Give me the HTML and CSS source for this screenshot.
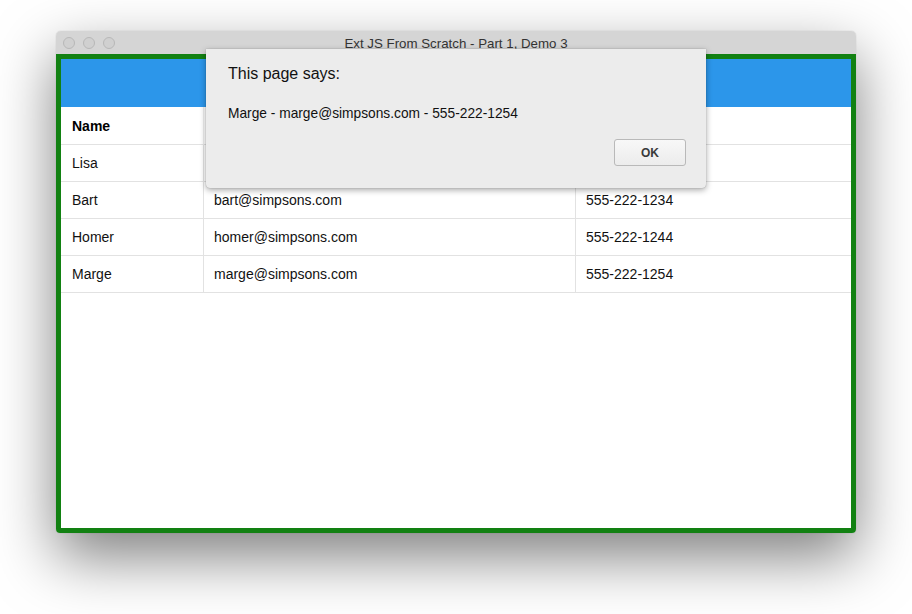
FILE: index.html
```html
<!DOCTYPE html>
<html>
<head>
<meta charset="utf-8">
<link rel="stylesheet" href="styles.css">
</head>
<body>
<div class="window">
  <div class="titlebar">
    <div class="lights">
      <span class="light"></span><span class="light"></span><span class="light"></span>
    </div>
    <div class="title">Ext JS From Scratch - Part 1, Demo 3</div>
  </div>
  <div class="content">
    <div class="panel-header"></div>
    <div class="grid">
      <div class="cell head c1">Name</div>
      <div class="cell head c2">Email</div>
      <div class="cell head c3">Phone</div>
      <div class="cell c1">Lisa</div>
      <div class="cell c2">lisa@simpsons.com</div>
      <div class="cell c3">555-222-1224</div>
      <div class="cell c1">Bart</div>
      <div class="cell c2">bart@simpsons.com</div>
      <div class="cell c3">555-222-1234</div>
      <div class="cell c1">Homer</div>
      <div class="cell c2">homer@simpsons.com</div>
      <div class="cell c3">555-222-1244</div>
      <div class="cell c1">Marge</div>
      <div class="cell c2">marge@simpsons.com</div>
      <div class="cell c3">555-222-1254</div>
    </div>
  </div>
  <div class="dialog">
    <div class="dialog-title">This page says:</div>
    <div class="dialog-msg">Marge - marge@simpsons.com - 555-222-1254</div>
    <div class="dialog-actions"><button class="ok">OK</button></div>
  </div>
</div>
</body>
</html>
```
FILE: styles.css
```css
html, body {
  margin: 0;
  padding: 0;
  background: #ffffff;
}
body {
  width: 912px;
  height: 614px;
  padding: 31px 56px 0 56px;
  box-sizing: border-box;
  overflow: hidden;
  font-family: "Liberation Sans", Arial, sans-serif;
}
.window {
  position: relative;
  width: 800px;
  height: 502px;
  display: flex;
  flex-direction: column;
  border-radius: 5px 5px 4px 4px;
  box-shadow: 0 24px 60px rgba(0, 0, 0, 0.5), 0 0 1px rgba(0,0,0,0.3);
}
.titlebar {
  height: 23px;
  background: #d5d5d5;
  border-radius: 5px 5px 0 0;
  display: flex;
  align-items: center;
  position: relative;
  flex: none;
}
.lights {
  display: flex;
  gap: 8px;
  padding-left: 7px;
}
.light {
  width: 10px;
  height: 10px;
  border-radius: 50%;
  background: #d0d0d0;
  border: 1px solid #b8b8b8;
}
.title {
  position: absolute;
  left: 0;
  right: 0;
  top: 5px;
  text-align: center;
  font-size: 13.3px;
  color: #333333;
}
.content {
  flex: 1;
  border: 5px solid #128112;
  border-radius: 0 0 4px 4px;
  background: #ffffff;
  display: flex;
  flex-direction: column;
}
.panel-header {
  height: 48px;
  background: #2c96ea;
  flex: none;
}
.grid {
  display: grid;
  grid-template-columns: 143px 372px 275px;
  grid-template-rows: 38px;
  grid-auto-rows: 37px;
}
.cell {
  box-sizing: border-box;
  border-bottom: 1px solid #e2e2e2;
  display: flex;
  align-items: center;
  padding-left: 10px;
  font-size: 14px;
  color: #111;
}
.cell.c1 {
  padding-left: 11px;
}
.c1, .c2 {
  border-right: 1px solid #e2e2e2;
}
.head {
  font-weight: bold;
  color: #000;
}
.head.c1, .head.c2 {
  border-right-color: #eeeeee;
}
.dialog {
  position: absolute;
  left: 150px;
  top: 18px;
  width: 500px;
  height: 139px;
  box-sizing: border-box;
  background: #ececec;
  border-radius: 0 0 4px 4px;
  box-shadow: 0 2px 6px rgba(0, 0, 0, 0.35), 0 0 1px rgba(0,0,0,0.35);
  padding: 15px 20px 0 22px;
  display: flex;
  flex-direction: column;
}
.dialog-title {
  font-size: 16px;
  color: #111;
  line-height: 20px;
}
.dialog-msg {
  font-size: 13.75px;
  color: #111;
  margin-top: 22px;
  line-height: 16px;
}
.dialog-actions {
  display: flex;
  justify-content: flex-end;
  margin-top: 17px;
}
.ok {
  width: 72px;
  height: 27px;
  border: 1px solid #b9b9b9;
  border-radius: 3px;
  background: linear-gradient(#f8f8f8, #ececec);
  font-family: "Liberation Sans", Arial, sans-serif;
  font-weight: bold;
  font-size: 12px;
  color: #3a3a3a;
  padding: 0;
}
```
